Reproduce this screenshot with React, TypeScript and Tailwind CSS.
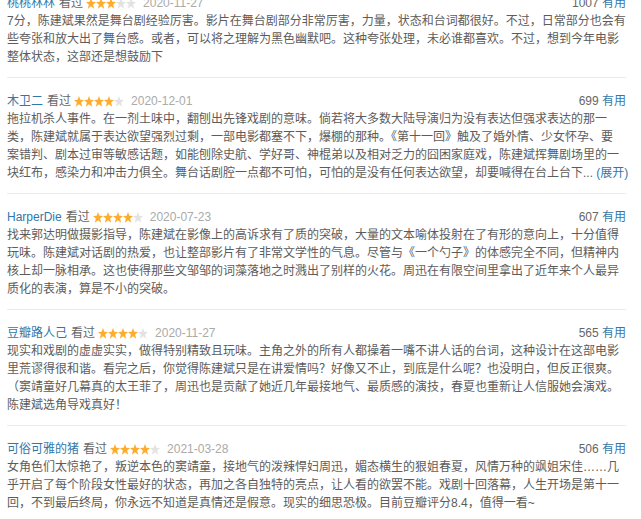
import React from "react";

type Review = {
  user: string;
  stars: number;
  date: string;
  votes: string;
  lines: string[];
  more?: boolean;
};

const reviews: Review[] = [
  {
    user: "桃桃林林",
    stars: 3,
    date: "2020-11-27",
    votes: "1007",
    lines: [
      "7分，陈建斌果然是舞台剧经验厉害。影片在舞台剧部分非常厉害，力量，状态和台词都很好。不过，日常部分也会有",
      "些夸张和放大出了舞台感。或者，可以将之理解为黑色幽默吧。这种夸张处理，未必谁都喜欢。不过，想到今年电影",
      "整体状态，这部还是想鼓励下",
    ],
  },
  {
    user: "木卫二",
    stars: 4,
    date: "2020-12-01",
    votes: "699",
    lines: [
      "拖拉机杀人事件。在一剂土味中，翻刨出先锋戏剧的意味。倘若将大多数大陆导演归为没有表达但强求表达的那一",
      "类，陈建斌就属于表达欲望强烈过剩，一部电影都塞不下，爆棚的那种。《第十一回》触及了婚外情、少女怀孕、要",
      "案错判、剧本过审等敏感话题，如能刨除史航、学好哥、神棍弟以及相对乏力的囧困家庭戏，陈建斌挥舞剧场里的一",
      "块红布，感染力和冲击力俱全。舞台话剧腔一点都不可怕，可怕的是没有任何表达欲望，却要喊得在台上台下...",
    ],
    more: true,
  },
  {
    user: "HarperDie",
    stars: 4,
    date: "2020-07-23",
    votes: "607",
    lines: [
      "找来郭达明做摄影指导，陈建斌在影像上的高诉求有了质的突破，大量的文本喻体投射在了有形的意向上，十分值得",
      "玩味。陈建斌对话剧的热爱，也让整部影片有了非常文学性的气息。尽管与《一个勺子》的体感完全不同，但精神内",
      "核上却一脉相承。这也使得那些文邹邹的词藻落地之时溅出了别样的火花。周迅在有限空间里拿出了近年来个人最异",
      "质化的表演，算是不小的突破。",
    ],
  },
  {
    user: "豆瓣路人己",
    stars: 4,
    date: "2020-11-27",
    votes: "565",
    lines: [
      "现实和戏剧的虚虚实实，做得特别精致且玩味。主角之外的所有人都操着一嘴不讲人话的台词，这种设计在这部电影",
      "里荒谬得很和谐。看完之后，你觉得陈建斌只是在讲爱情吗？好像又不止，到底是什么呢？也没明白，但反正很爽。",
      "（窦靖童好几幕真的太王菲了，周迅也是贡献了她近几年最接地气、最质感的演技，春夏也重新让人信服她会演戏。",
      "陈建斌选角导戏真好！",
    ],
  },
  {
    user: "可俗可雅的猪",
    stars: 4,
    date: "2021-03-28",
    votes: "506",
    lines: [
      "女角色们太惊艳了，叛逆本色的窦靖童，接地气的泼辣悍妇周迅，媚态横生的狠姐春夏，风情万种的飒姐宋佳……几",
      "乎开启了每个阶段女性最好的状态，再加之各自独特的亮点，让人看的欲罢不能。戏剧十回落幕，人生开场是第十一",
      "回，不到最后终局，你永远不知道是真情还是假意。现实的细思恐极。目前豆瓣评分8.4，值得一看~",
    ],
  },
];

function Star({ on }: { on: boolean }) {
  return (
    <svg width="10" height="11" viewBox="0 0 10 10" className="block" preserveAspectRatio="none">
      <polygon
        points="5,0 6.35,3.5 10,3.6 7.15,5.95 8.15,9.7 5,7.6 1.85,9.7 2.85,5.95 0,3.6 3.65,3.5"
        fill={on ? "#ffac2d" : "#e3e3e3"}
      />
    </svg>
  );
}

function ReviewItem({ r }: { r: Review }) {
  return (
    <div className="pt-[14px] pb-[11px] border-b border-[#ececec]">
      <div className="flex items-center justify-between h-[18px] leading-[18px]">
        <div className="flex items-center">
          <span className="text-[#3377aa]">{r.user}</span>
          <span className="ml-[4px] text-[#666]">看过</span>
          <span className="ml-[3px] flex">
            {[0, 1, 2, 3, 4].map((i) => (
              <Star key={i} on={i < r.stars} />
            ))}
          </span>
          <span className="ml-[7px] text-[#aaa]">{r.date}</span>
        </div>
        <div>
          <span className="text-[#666]">{r.votes}</span>
          <span className="text-[#3377aa]"> 有用</span>
        </div>
      </div>
      <div className="text-[#5c5c5c] leading-[18px]">
        {r.lines.map((l, i) => (
          <div key={i} className="whitespace-nowrap">
            {l}
            {r.more && i === r.lines.length - 1 ? (
              <span className="text-[#3377aa]"> (展开)</span>
            ) : null}
          </div>
        ))}
      </div>
    </div>
  );
}

export default function App() {
  return (
    <div
      className="w-[641px] h-[519px] overflow-hidden bg-white text-[12px]"
      style={{ fontFamily: '"Liberation Sans", "Noto Sans CJK SC", sans-serif' }}
    >
      <div className="ml-[7px] w-[619px] -mt-[20px]">
        {reviews.map((r, i) => (
          <ReviewItem key={i} r={r} />
        ))}
      </div>
    </div>
  );
}
